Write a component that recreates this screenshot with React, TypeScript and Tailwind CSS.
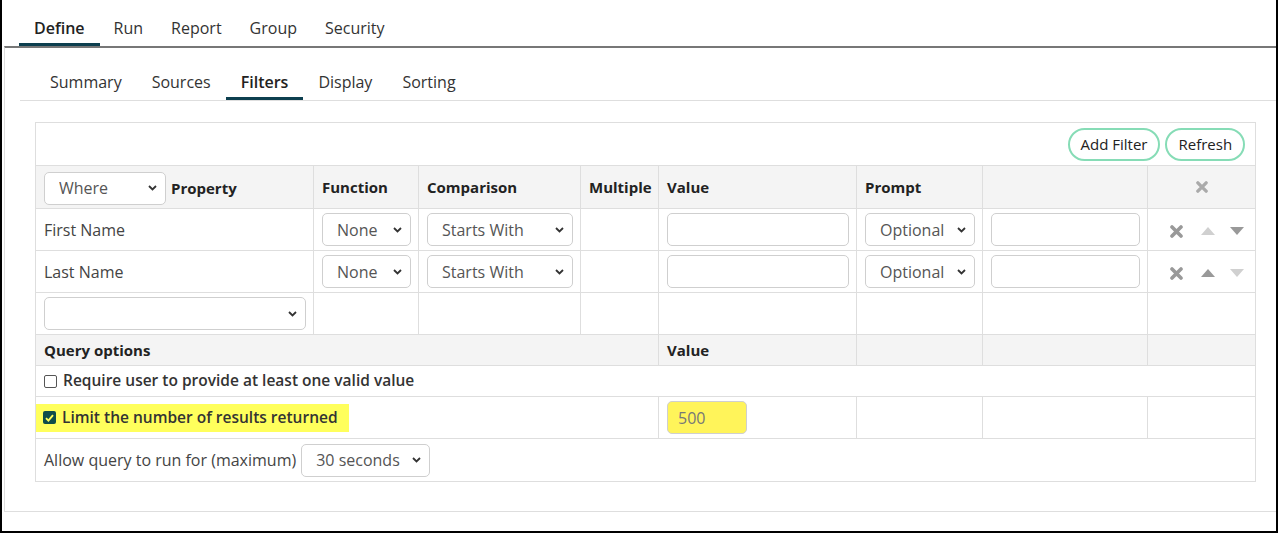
import type { ReactNode } from "react";

const font = "font-['Open_Sans',sans-serif]";

function Chevron() {
  return (
    <svg
      className="pointer-events-none absolute right-[9px] top-1/2 -translate-y-1/2"
      width="9"
      height="6"
      viewBox="0 0 9 6"
    >
      <path d="M1 1l3.5 3.5L8 1" fill="none" stroke="#333" strokeWidth="1.8" />
    </svg>
  );
}

function Select({ value, width }: { value: string; width: string }) {
  return (
    <div className={`relative inline-block ${width}`}>
      <select
        defaultValue={value}
        className="h-[33px] w-full appearance-none rounded-[5px] border border-[#cfcfcf] bg-white pl-[14px] pr-6 text-[16px] font-normal text-[#555] outline-none"
      >
        <option value={value}>{value}</option>
      </select>
      <Chevron />
    </div>
  );
}

function TextInput({ width, value, className = "" }: { width: string; value?: string; className?: string }) {
  return (
    <input
      type="text"
      defaultValue={value}
      className={`h-[33px] ${width} rounded-[5px] border border-[#cfcfcf] px-[10px] text-[16px] text-[#777] outline-none ${className}`}
    />
  );
}

function XIcon({ color, size = 13 }: { color: string; size?: number }) {
  return (
    <svg width={size} height={size} viewBox="0 0 13 13">
      <path d="M2 2l9 9M11 2l-9 9" stroke={color} strokeWidth="3.6" strokeLinecap="round" />
    </svg>
  );
}

function Tri({ up, color }: { up: boolean; color: string }) {
  return (
    <svg width="14" height="8" viewBox="0 0 14 8">
      <polygon points={up ? "0,8 7,0 14,8" : "0,0 14,0 7,8"} fill={color} />
    </svg>
  );
}

function RowActions({ upOn, downOn }: { upOn: boolean; downOn: boolean }) {
  return (
    <div className="flex items-center pl-[14px] pt-[3px]">
      <XIcon color="#999" />
      <span className="ml-[18px]">
        <Tri up color={upOn ? "#999" : "#d0d0d0"} />
      </span>
      <span className="ml-[15px]">
        <Tri up={false} color={downOn ? "#999" : "#d0d0d0"} />
      </span>
    </div>
  );
}

function Td({ children, className = "", colSpan }: { children?: ReactNode; className?: string; colSpan?: number }) {
  return (
    <td colSpan={colSpan} className={`border border-[#dedede] px-[8px] align-middle ${className}`}>
      {children}
    </td>
  );
}

function Th({ children, className = "", colSpan }: { children?: ReactNode; className?: string; colSpan?: number }) {
  return (
    <th
      colSpan={colSpan}
      className={`border border-[#dedede] bg-[#f4f4f4] px-[8px] text-left align-middle text-[15px] font-bold text-[#222] ${className}`}
    >
      {children}
    </th>
  );
}

export default function App() {
  const topTabs = ["Define", "Run", "Report", "Group", "Security"];
  const subTabs = ["Summary", "Sources", "Filters", "Display", "Sorting"];

  return (
    <div className={`${font} h-[533px] w-[1278px] overflow-hidden border-x-2 border-b-2 border-black bg-white pl-[2px] text-[16px] text-[#333]`}>
      <nav className="flex h-[46px] items-end pl-[15px]">
        {topTabs.map((t, i) => (
          <div
            key={t}
            className={`border-b-[3px] pb-[4px] leading-[22px] ${
              i === 0 ? "border-[#0d3f4f] px-[15px] font-semibold text-[#222]" : "border-transparent px-[14px] text-[#333]"
            }`}
          >
            {t}
          </div>
        ))}
      </nav>

      <div className="h-[466px] border-t-2 border-l border-b border-t-[#777] border-l-[#dedede] border-b-[#dedede] pt-[23px]">
        <div className="ml-[15px] flex border-b border-[#dedede] pl-[15px]">
          {subTabs.map((t) => (
            <div
              key={t}
              className={`border-b-[3px] px-[15px] pb-[4px] leading-[22px] ${
                t === "Filters" ? "border-[#0d3f4f] font-semibold text-[#222]" : "border-transparent text-[#333]"
              }`}
            >
              {t}
            </div>
          ))}
        </div>

        <table className="ml-[30px] mt-[21px] w-[1220px] table-fixed border-collapse">
          <colgroup>
            <col className="w-[278px]" />
            <col className="w-[105px]" />
            <col className="w-[162px]" />
            <col className="w-[78px]" />
            <col className="w-[198px]" />
            <col className="w-[126px]" />
            <col className="w-[165px]" />
            <col className="w-[108px]" />
          </colgroup>
          <tbody>
            <tr className="h-[43px]">
              <td colSpan={8} className="border border-[#dedede] pr-[10px] text-right align-middle">
                <div className="flex justify-end gap-[5px]">
                  <button className="h-[33px] rounded-full border-2 border-[#86dcb6] bg-white px-[11px] text-[15px] text-[#222]">
                    Add Filter
                  </button>
                  <button className="h-[33px] rounded-full border-2 border-[#86dcb6] bg-white px-[11px] text-[15px] text-[#222]">
                    Refresh
                  </button>
                </div>
              </td>
            </tr>
            <tr className="h-[43px]">
              <Th>
                <div className="flex items-center gap-[5px] pt-[2px]">
                  <Select value="Where" width="w-[122px]" />
                  <span>Property</span>
                </div>
              </Th>
              <Th>Function</Th>
              <Th>Comparison</Th>
              <Th className="px-[6px]">Multiple</Th>
              <Th>Value</Th>
              <Th>Prompt</Th>
              <Th />
              <Th>
                <div className="flex justify-center">
                  <XIcon color="#aaa" size={12} />
                </div>
              </Th>
            </tr>
            {[
              { name: "First Name", up: false, down: true },
              { name: "Last Name", up: true, down: false },
            ].map((r) => (
              <tr key={r.name} className="h-[42px]">
                <Td className="text-[#444]">{r.name}</Td>
                <Td>
                  <Select value="None" width="w-[89px]" />
                </Td>
                <Td>
                  <Select value="Starts With" width="w-[146px]" />
                </Td>
                <Td />
                <Td>
                  <TextInput width="w-[182px]" />
                </Td>
                <Td>
                  <Select value="Optional" width="w-[110px]" />
                </Td>
                <Td>
                  <TextInput width="w-[149px]" />
                </Td>
                <Td className="px-0">
                  <RowActions upOn={r.up} downOn={r.down} />
                </Td>
              </tr>
            ))}
            <tr className="h-[42px]">
              <Td>
                <Select value="" width="w-[262px]" />
              </Td>
              <Td />
              <Td />
              <Td />
              <Td />
              <Td />
              <Td />
              <Td />
            </tr>
            <tr className="h-[31px]">
              <Th colSpan={4}>Query options</Th>
              <Th>Value</Th>
              <Th />
              <Th />
              <Th />
            </tr>
            <tr className="h-[31px]">
              <Td colSpan={8} className="text-[15.5px] font-semibold text-[#333]">
                <div className="flex items-center gap-[6px]">
                  <span className="h-[13px] w-[13px] rounded-[2px] border border-[#555] bg-white" />
                  Require user to provide at least one valid value
                </div>
              </Td>
            </tr>
            <tr className="h-[42px]">
              <td colSpan={4} className="border border-[#dedede] pl-0 align-middle">
                <div className="flex h-[28px] w-[313px] items-center gap-[6px] bg-[#ffff5c] pl-[7px] text-[15.5px] font-semibold text-[#333]">
                  <span className="flex h-[13px] w-[13px] items-center justify-center rounded-[2px] bg-[#0e4d4a]">
                    <svg width="9" height="8" viewBox="0 0 9 8">
                      <path d="M1 4.2l2.4 2.4L8 1.2" fill="none" stroke="#ffff5c" strokeWidth="1.9" />
                    </svg>
                  </span>
                  Limit the number of results returned
                </div>
              </td>
              <Td>
                <TextInput width="w-[80px]" value="500" className="bg-[#fff45a]" />
              </Td>
              <Td />
              <Td />
              <Td />
            </tr>
            <tr className="h-[43px]">
              <td colSpan={8} className="border border-[#dedede] px-[8px] align-middle">
                <div className="flex items-center gap-[5px] text-[#444]">
                  <span>Allow query to run for (maximum)</span>
                  <Select value="30 seconds" width="w-[129px]" />
                </div>
              </td>
            </tr>
          </tbody>
        </table>
      </div>
    </div>
  );
}
